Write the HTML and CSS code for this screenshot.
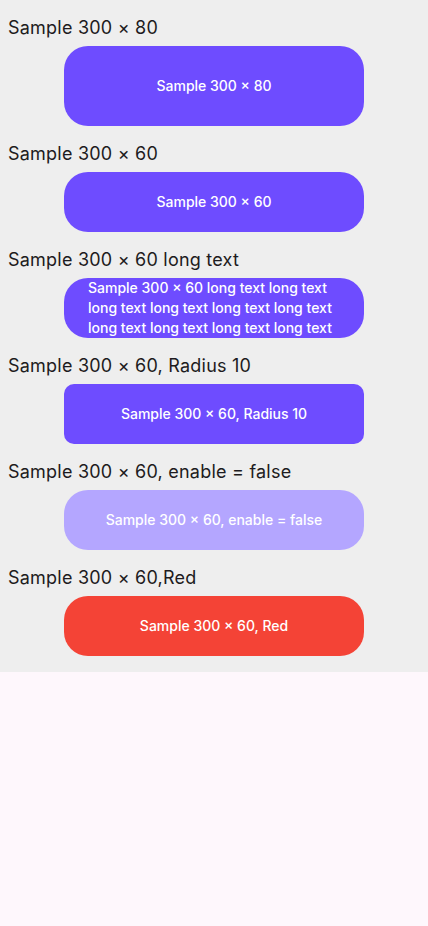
FILE: index.html
```html
<!DOCTYPE html>
<html>
<head>
<meta charset="utf-8">
<link rel="stylesheet" href="styles.css">
</head>
<body>
<div class="panel">
  <div class="item">
    <div class="label">Sample 300 × 80</div>
    <div class="btn tall"><span>Sample 300 × 80</span></div>
  </div>
  <div class="item">
    <div class="label">Sample 300 × 60</div>
    <div class="btn"><span>Sample 300 × 60</span></div>
  </div>
  <div class="item">
    <div class="label">Sample 300 × 60 long text</div>
    <div class="btn"><span>Sample 300 × 60 long text long text long text long text long text long text long text long text long text long text</span></div>
  </div>
  <div class="item">
    <div class="label">Sample 300 × 60, Radius 10</div>
    <div class="btn r10"><span>Sample 300 × 60, Radius 10</span></div>
  </div>
  <div class="item">
    <div class="label">Sample 300 × 60, enable = false</div>
    <div class="btn disabled"><span>Sample 300 × 60, enable = false</span></div>
  </div>
  <div class="item">
    <div class="label">Sample 300 × 60,Red</div>
    <div class="btn red"><span>Sample 300 × 60, Red</span></div>
  </div>
</div>
</body>
</html>
```
FILE: styles.css
```css
html, body {
  margin: 0;
  padding: 0;
  background: #fef7fc;
  font-family: Inter, "Noto Sans", sans-serif;
}
.panel {
  background: #eeeeee;
  padding-bottom: 16px;
  display: flex;
  flex-direction: column;
}
.item {
  padding-top: 18px;
  display: flex;
  flex-direction: column;
  gap: 8px;
}
.label {
  padding-left: 8px;
  font-size: 18px;
  line-height: 20px;
  letter-spacing: 0.22px;
  color: #1d1b20;
}
.btn {
  width: 300px;
  height: 60px;
  box-sizing: border-box;
  margin-left: 64px;
  padding: 0 24px;
  background: #6e4cff;
  border-radius: 24px;
  display: flex;
  align-items: center;
  justify-content: center;
  color: #ffffff;
  font-size: 14px;
  font-weight: 500;
  line-height: 20px;
  text-align: left;
  overflow: hidden;
}
.btn.tall { height: 80px; }
.btn.r10 { border-radius: 10px; }
.btn.disabled { background: #b4a6ff; }
.btn.red { background: #f44336; }
```
